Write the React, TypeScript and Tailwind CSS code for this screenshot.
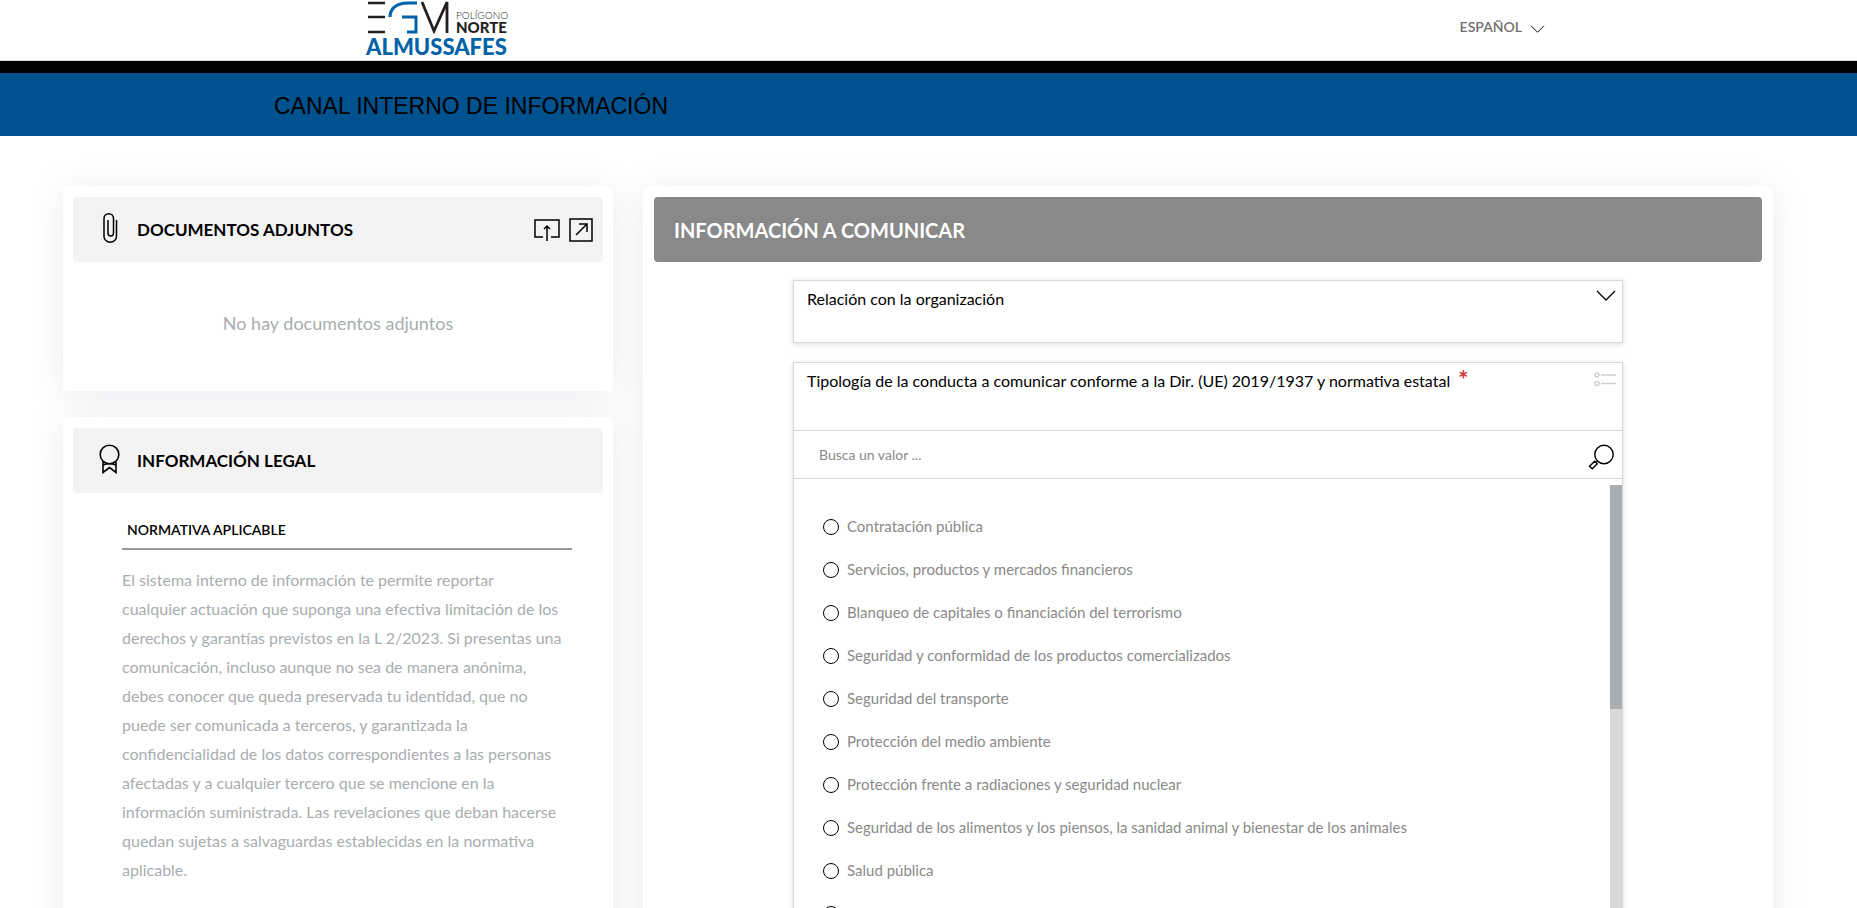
import React, { useState } from 'react';
import clsx from 'clsx';

const legalText =
  'cualquier actuación que suponga una efectiva limitación de los derechos y garantías previstos en la L 2/2023. Si presentas una comunicación, incluso aunque no sea de manera anónima, debes conocer que queda preservada tu identidad, que no puede ser comunicada a terceros, y garantizada la confidencialidad de los datos correspondientes a las personas afectadas y a cualquier tercero que se mencione en la información suministrada. Las revelaciones que deban hacerse quedan sujetas a salvaguardas establecidas en la normativa aplicable.';

const options = [
  'Contratación pública',
  'Servicios, productos y mercados financieros',
  'Blanqueo de capitales o financiación del terrorismo',
  'Seguridad y conformidad de los productos comercializados',
  'Seguridad del transporte',
  'Protección del medio ambiente',
  'Protección frente a radiaciones y seguridad nuclear',
  'Seguridad de los alimentos y los piensos, la sanidad animal y bienestar de los animales',
  'Salud pública',
  'Protección de los consumidores',
];

function Logo() {
  return (
    <svg width="142" height="60" viewBox="0 0 142 60" className="overflow-visible" role="img" aria-label="EGM Polígono Norte Almussafes">
      <g stroke="#231f20" fill="none">
        <path d="M2 3h17M2 17h17M2 32h17" strokeWidth="2.4" />
        <path d="M56 2l12 29 13-29v31" strokeWidth="2.8" />
      </g>
      <path d="M51 3H42C30 3 24 9 24 17M36 17h14v15h-9" fill="none" stroke="#0062a8" strokeWidth="3" />
      <text x="90" y="19" fontSize="10" fill="#231f20" fontFamily="Lato, sans-serif" fontWeight="300">POLÍGONO</text>
      <text x="90" y="33" fontSize="15" fill="#231f20" fontFamily="Lato, sans-serif" fontWeight="900">NORTE</text>
      <text x="0" y="55" fontSize="22" fill="#0062a8" fontFamily="Lato, sans-serif" fontWeight="900">ALMUSSAFES</text>
    </svg>
  );
}

function Chevron({ className }: { className?: string }) {
  return (
    <svg className={className} viewBox="0 0 20 11" fill="none" stroke="currentColor" strokeWidth="1.3" aria-hidden="true">
      <path d="M1 1l9 9 9-9" />
    </svg>
  );
}

function ClipIcon() {
  return (
    <svg width="15" height="30" viewBox="0 0 15 30" fill="none" stroke="currentColor" strokeWidth="1.5" aria-hidden="true">
      <path d="M13.5 7v16.5a6 5.5 0 0 1-12.5 0V5.5a4.7 4.7 0 0 1 9.5 0V20a2.7 3 0 0 1-5.5 0V7" />
    </svg>
  );
}

function BadgeIcon() {
  return (
    <svg width="21" height="30" viewBox="0 0 21 30" fill="none" stroke="currentColor" strokeWidth="1.6" aria-hidden="true">
      <circle cx="10.5" cy="10.5" r="9.3" />
      <path d="M4 18v10.5l6.5-5 6.5 5V18M4 21c4-1.5 9-1.5 13 0" />
    </svg>
  );
}

function UploadIcon() {
  return (
    <svg width="26" height="24" viewBox="0 0 26 24" fill="none" stroke="currentColor" strokeWidth="1.5" aria-hidden="true">
      <path d="M9 19H1V2h24v17h-8M13 23V8M10 11l3-3 3 3" />
    </svg>
  );
}

function ExpandIcon() {
  return (
    <svg width="24" height="24" viewBox="0 0 24 24" fill="none" stroke="currentColor" strokeWidth="1.5" aria-hidden="true">
      <path d="M1 1h22v22H1zM7 17L18 6M10 6h8v8" />
    </svg>
  );
}

function ListIcon() {
  return (
    <svg width="22" height="15" viewBox="0 0 22 15" fill="none" stroke="#cfcfcf" strokeWidth="1.5" aria-hidden="true">
      <circle cx="3" cy="3" r="2" />
      <circle cx="3" cy="11.5" r="2" />
      <path d="M7 3h15M7 11.5h15" />
    </svg>
  );
}

function SearchIcon() {
  return (
    <svg width="26" height="30" viewBox="0 0 26 30" fill="none" stroke="currentColor" strokeWidth="1.4" aria-hidden="true">
      <circle cx="16" cy="14.5" r="9.2" />
      <path d="M9.5 21L8 22.5M6.7 21.3l2.6 2.5-5 5-2.8-2.5z" />
    </svg>
  );
}

function Card({ className, children }: { className?: string; children: React.ReactNode }) {
  return (
    <section className={clsx('rounded bg-white pt-[11px] shadow-[0_3px_34px_rgba(82,98,120,0.12)]', className)}>
      {children}
    </section>
  );
}

export default function App() {
  const [conduct, setConduct] = useState('');

  return (
    <div className="h-screen overflow-hidden bg-white font-['Lato',sans-serif] text-black">
      <header>
        <div className="flex h-[61px] items-start justify-between border-b border-gray-300 pl-[366px] pr-[312px]">
          <Logo />
          <button type="button" className="flex items-center gap-2 pt-[18px] text-sm leading-[18px] font-semibold text-[#6f6f6f]">
            ESPAÑOL
            <Chevron className="mt-1 h-[8px] w-[15px] text-black" />
          </button>
        </div>
        <div className="h-[12px] bg-black" />
        <div className="flex h-[63px] items-center bg-[#00528f] pl-[274px] pt-[3px]">
          <h1 className="font-['Liberation_Sans',sans-serif] text-[23px]">CANAL INTERNO DE INFORMACIÓN</h1>
        </div>
      </header>

      <main className="grid grid-cols-[550fr_1130fr] gap-[30px] pt-[50px] pr-[84px] pl-[63px]">
        <div className="flex flex-col gap-[26px]">
          <Card className="px-[10px]">
            <div className="flex h-[65px] items-center rounded bg-[#f3f3f3] pr-[10px] pl-[26px]">
              <span className="flex w-[38px] justify-start pb-1 pl-1"><ClipIcon /></span>
              <h2 className="flex-1 text-[17px] font-bold">DOCUMENTOS ADJUNTOS</h2>
              <div className="flex items-center gap-[9px]">
                <button type="button" aria-label="Subir documento"><UploadIcon /></button>
                <button type="button" aria-label="Ampliar"><ExpandIcon /></button>
              </div>
            </div>
            <p className="pt-[47px] pb-[54px] text-center text-lg leading-[28px] text-[#a9adb0]">No hay documentos adjuntos</p>
          </Card>

          <Card className="px-[10px]">
            <div className="flex h-[65px] items-center rounded bg-[#f3f3f3] pr-[10px] pl-[26px]">
              <span className="flex w-[38px] justify-start pb-1"><BadgeIcon /></span>
              <h2 className="text-[17px] font-bold">INFORMACIÓN LEGAL</h2>
            </div>
            <div className="pt-[27px] pr-[31px] pb-24 pl-[49px]">
              <h3 className="border-b-2 border-[#999] px-[5px] pb-2 text-sm leading-[20px] font-semibold">NORMATIVA APLICABLE</h3>
              <p className="pt-[15px] pr-1 text-base leading-[29px] text-[#a9adb0]">
                El sistema interno de información te permite reportar
                <br />
                {legalText}
              </p>
            </div>
          </Card>
        </div>

        <Card className="px-[11px]">
          <div className="flex h-[65px] items-center rounded bg-[#898989] px-5">
            <h2 className="text-xl font-bold text-white">INFORMACIÓN A COMUNICAR</h2>
          </div>
          <form className="flex flex-col gap-[19px] px-[139px] pt-[18px]">
            <button
              type="button"
              className="flex h-[63px] items-start justify-between border border-[#d9d9d9] pt-[6px] pr-[6px] pl-[13px] text-left shadow-[0_1px_5px_rgba(0,0,0,0.15)]"
            >
              <span className="text-base leading-[24px]">Relación con la organización</span>
              <Chevron className="mt-[3px] h-[11px] w-[20px]" />
            </button>

            <fieldset className="border border-[#d9d9d9] shadow-[0_1px_5px_rgba(0,0,0,0.15)]">
              <div className="flex h-[67px] items-start justify-between pt-[6px] pr-[6px] pl-[13px]">
                <div className="flex gap-2 text-base leading-[24px]">
                  <span>Tipología de la conducta a comunicar conforme a la Dir. (UE) 2019/1937 y normativa estatal</span>
                  <span className="text-2xl leading-[22px] font-bold text-[#d0363c]">*</span>
                </div>
                <span className="pt-[3px]"><ListIcon /></span>
              </div>
              <div className="flex h-[49px] items-center border-y border-[#d9d9d9] pr-[8px] pl-[25px]">
                <input
                  type="text"
                  aria-label="Busca un valor"
                  placeholder="Busca un valor ..."
                  className="flex-1 text-sm outline-none placeholder:text-[#8a8a8a]"
                />
                <button type="button" aria-label="Buscar"><SearchIcon /></button>
              </div>
              <div className="flex pt-[6px]">
                <div className="flex-1 pt-[20px] pl-[29px]">
                  {options.map((option) => (
                    <label key={option} className="flex h-[43px] items-center gap-2 text-[15px] text-[#8a8a8a]">
                      <input
                        type="radio"
                        name="conduct"
                        checked={conduct === option}
                        onChange={() => setConduct(option)}
                        className="size-4 appearance-none rounded-full border border-black checked:bg-black"
                      />
                      {option}
                    </label>
                  ))}
                </div>
                <div className="w-[12px] bg-[#d9d9d9]">
                  <div className="h-[224px] bg-[#a9adb0]" />
                </div>
              </div>
            </fieldset>
          </form>
        </Card>
      </main>
    </div>
  );
}
